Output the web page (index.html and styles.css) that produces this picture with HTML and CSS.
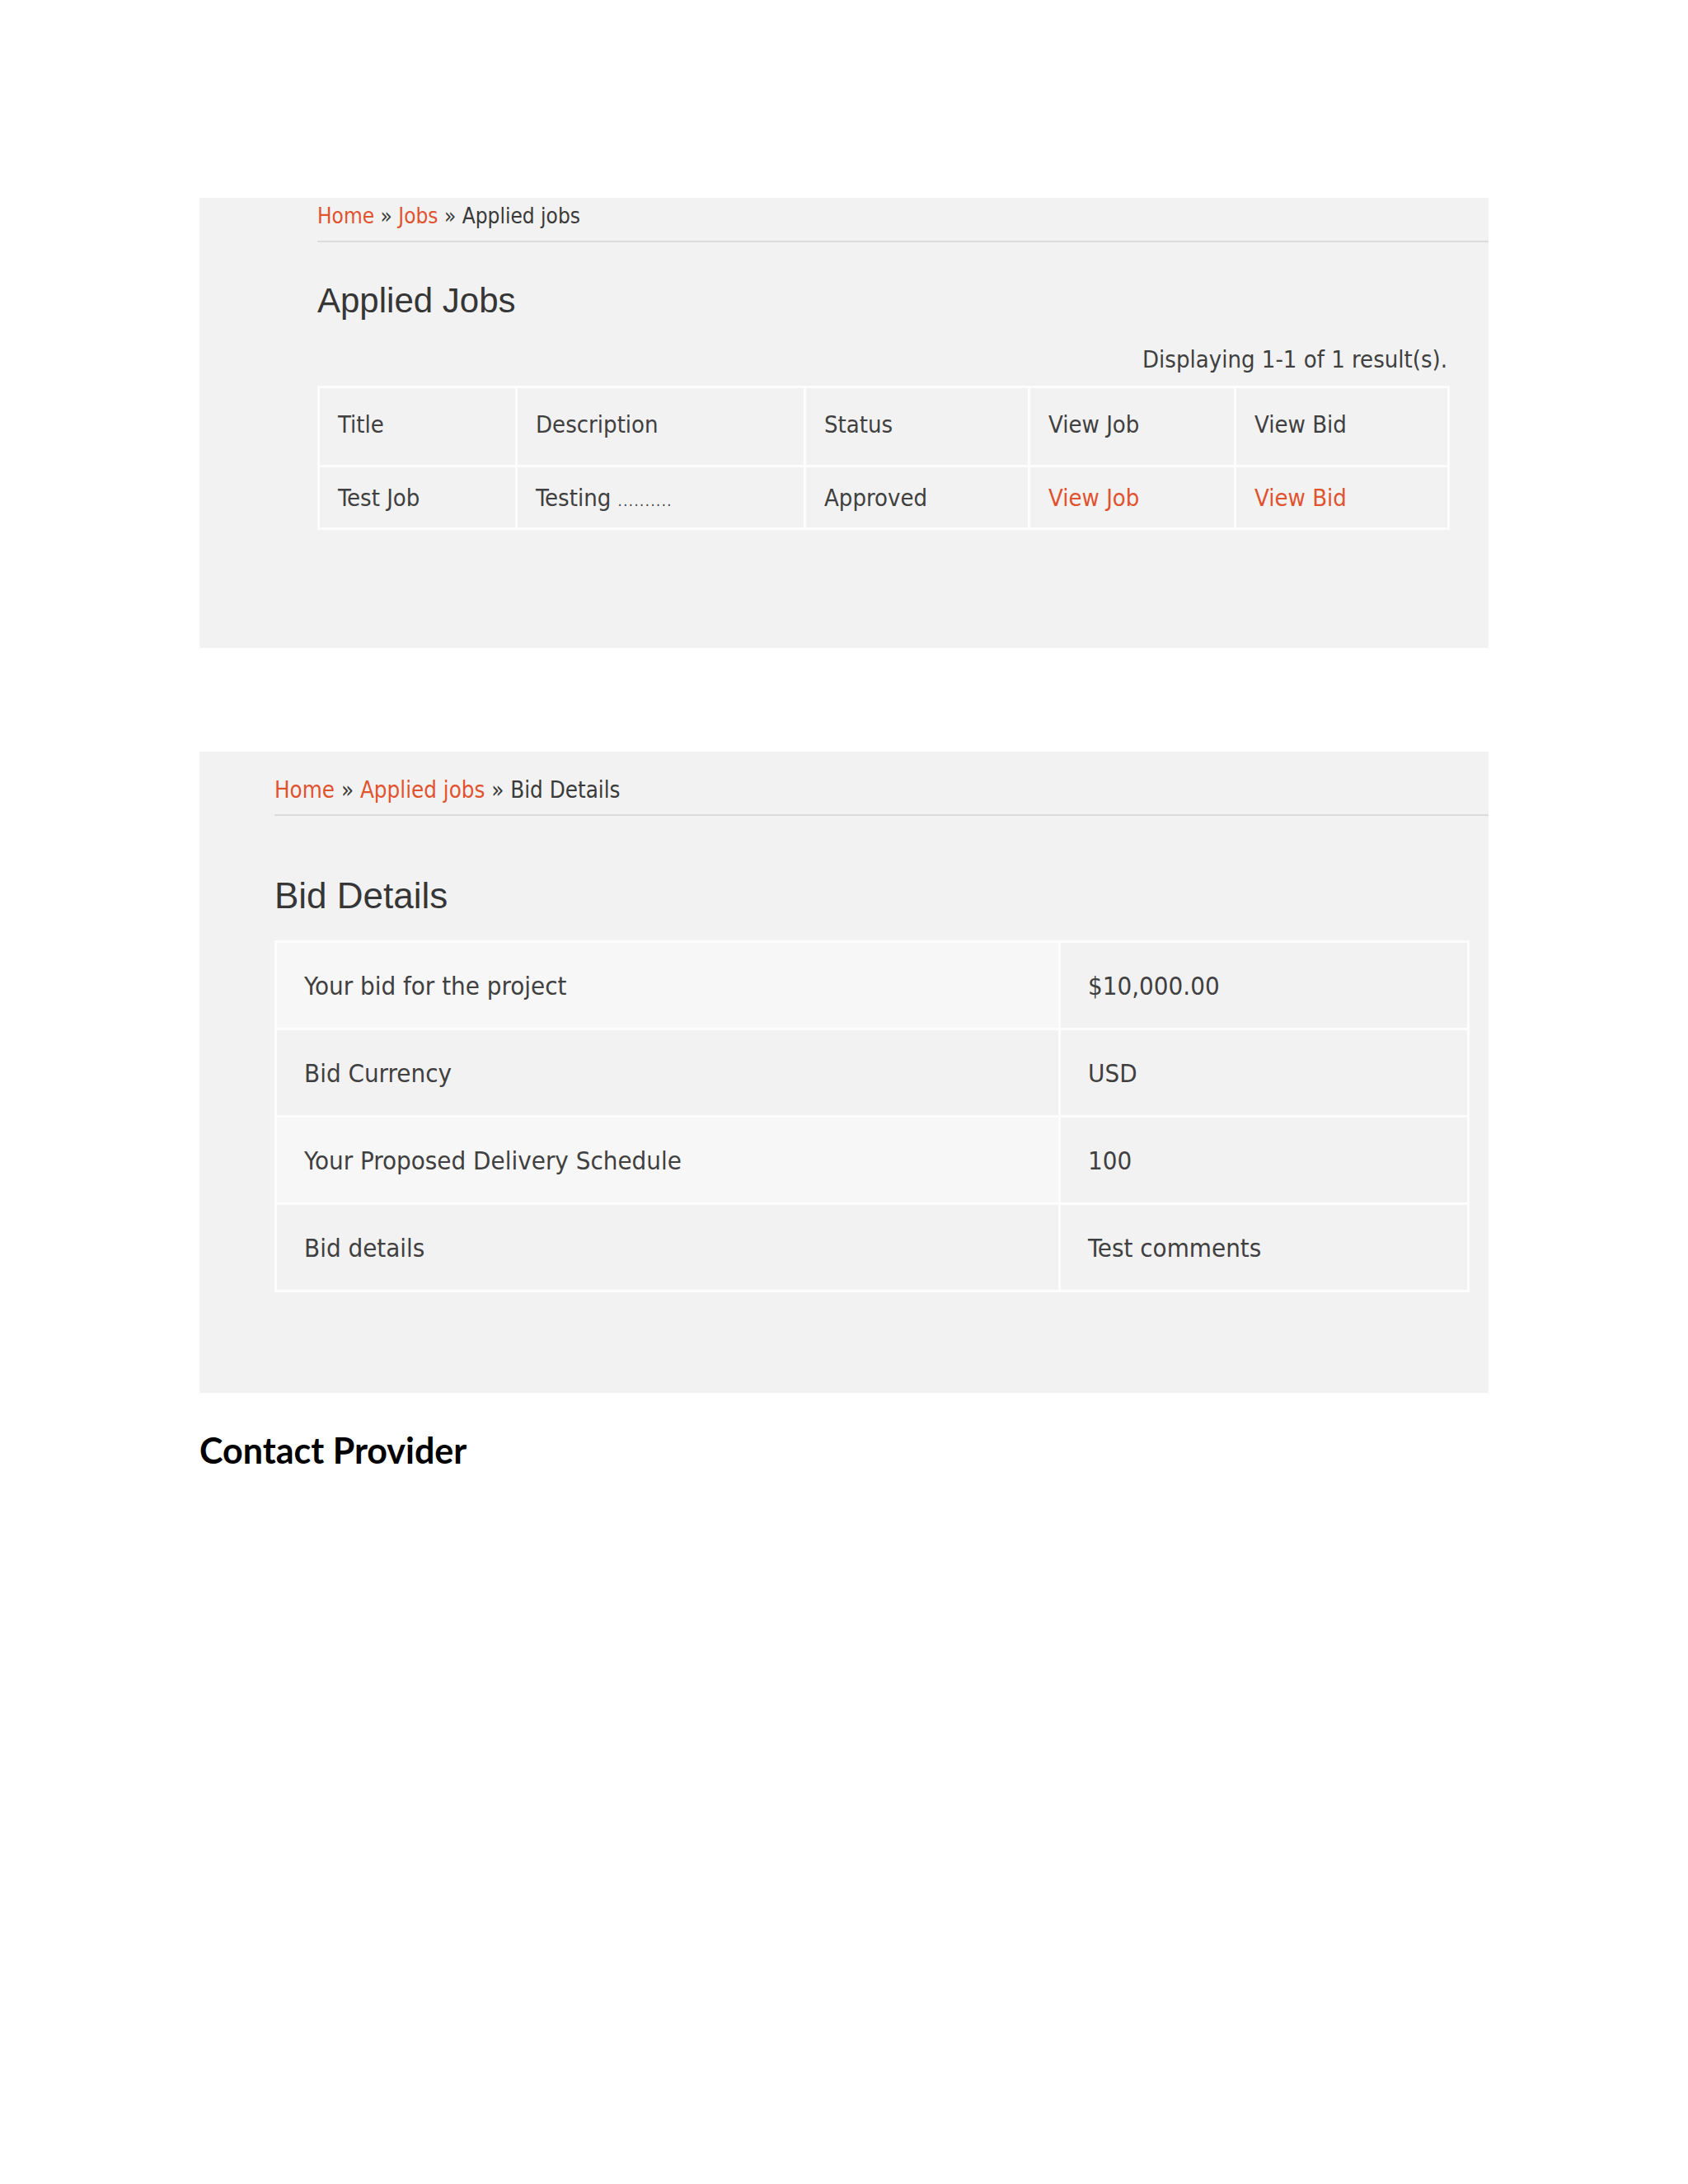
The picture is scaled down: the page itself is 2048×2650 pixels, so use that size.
FILE: index.html
```html
<!DOCTYPE html>
<html>
<head>
<meta charset="utf-8">
<title>Applied Jobs</title>
<link rel="stylesheet" href="styles.css">
</head>
<body>
<div class="page">
  <section class="panel panel-jobs">
    <nav class="crumbs"><a href="#">Home</a> » <a href="#">Jobs</a> » <span>Applied jobs</span></nav>
    <h1 class="title">Applied Jobs</h1>
    <div class="jobs-wrap">
      <div class="summary">Displaying 1-1 of 1 result(s).</div>
      <table class="grid jobs">
        <colgroup>
          <col class="c1"><col class="c2"><col class="c3"><col class="c4"><col class="c5">
        </colgroup>
        <thead>
          <tr><th>Title</th><th>Description</th><th>Status</th><th>View Job</th><th>View Bid</th></tr>
        </thead>
        <tbody>
          <tr><td>Test Job</td><td>Testing <span class="dots">..........</span></td><td>Approved</td><td><a href="#">View Job</a></td><td><a href="#">View Bid</a></td></tr>
        </tbody>
      </table>
    </div>
  </section>

  <section class="panel panel-bid">
    <nav class="crumbs"><a href="#">Home</a> » <a href="#">Applied jobs</a> » <span>Bid Details</span></nav>
    <h1 class="title">Bid Details</h1>
    <table class="grid bid">
      <tbody>
        <tr class="odd"><td>Your bid for the project</td><td>$10,000.00</td></tr>
        <tr class="even"><td>Bid Currency</td><td>USD</td></tr>
        <tr class="odd"><td>Your Proposed Delivery Schedule</td><td>100</td></tr>
        <tr class="even"><td>Bid details</td><td>Test comments</td></tr>
      </tbody>
    </table>
  </section>

  <h2 class="contact">Contact Provider</h2>
</div>
</body>
</html>
```

FILE: styles.css
```css
html, body {
  margin: 0;
  padding: 0;
  background: #ffffff;
}

.page {
  padding: 240px 0 0 242px;
  width: 1564px;
}

.panel {
  background: #f3f2f2;
  box-sizing: border-box;
  font-family: "Liberation Sans Narrow", "DejaVu Sans Condensed", "Roboto Condensed", "Liberation Sans", sans-serif;
  font-stretch: condensed;
  color: #404040;
}

.panel-jobs {
  height: 546px;
  padding-left: 143px;
}

.panel-bid {
  height: 778px;
  margin-top: 126px;
  padding-left: 91px;
  padding-top: 24px;
}

.crumbs {
  font-size: 26px;
  line-height: 44px;
  height: 52px;
  border-bottom: 2px solid #dcdcdc;
  color: #3a3a3a;
}

.panel-bid .crumbs {
  font-size: 27.5px;
}

.crumbs a {
  color: #e0532f;
  text-decoration: none;
}

.title {
  font-family: "Liberation Sans", Arial, sans-serif;
  font-stretch: normal;
  font-weight: normal;
  font-size: 42px;
  color: #363636;
  margin: 0;
  line-height: 50px;
}

.panel-jobs .title {
  padding-top: 46px;
}

.panel-bid .title {
  padding-top: 72px;
  font-size: 44px;
}

.jobs-wrap {
  width: 1371px;
}

.summary {
  text-align: right;
  font-size: 29px;
  line-height: 36px;
  margin-top: 28px;
  margin-bottom: 14px;
}

.grid {
  border-collapse: collapse;
  font-size: 29px;
}

.grid td, .grid th {
  border: 3px solid #fdfdfd;
  text-align: left;
  font-weight: normal;
  vertical-align: middle;
}

.grid a {
  color: #e0532f;
  text-decoration: none;
}

.jobs {
  width: 1371px;
  table-layout: fixed;
}

.jobs .c1 { width: 240px; }
.jobs .c2 { width: 350px; }
.jobs .c3 { width: 272px; }
.jobs .c4 { width: 250px; }
.jobs .c5 { width: 259px; }

.jobs th {
  height: 87px;
  padding: 0 0 6px 22px;
}

.jobs td {
  height: 73px;
  padding: 0 0 0 22px;
}

.dots {
  font-size: 18px;
  letter-spacing: 1.5px;
}

.bid {
  margin-top: 29px;
  width: 1450px;
  table-layout: fixed;
  font-size: 31px;
}

.bid td {
  height: 103px;
  padding: 0 0 0 33px;
}

.bid td:first-child {
  width: 915px;
}

.bid tr.odd td:first-child {
  background: #f8f7f7;
}

.contact {
  font-family: "Lato", "Liberation Sans", sans-serif;
  font-weight: bold;
  font-size: 43px;
  color: #000;
  margin: 43px 0 0 0;
  line-height: 54px;
}
```
